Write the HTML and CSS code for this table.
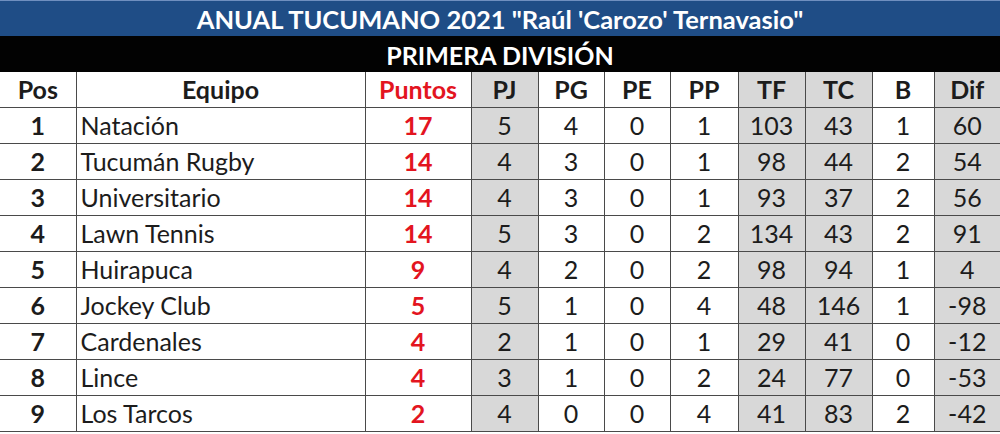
FILE: index.html
```html
<!DOCTYPE html>
<html lang="es">
<head>
<meta charset="utf-8">
<title>Anual Tucumano 2021</title>
<link rel="stylesheet" href="styles.css">
</head>
<body>
<div class="board">
  <div class="title">ANUAL TUCUMANO 2021 "Raúl 'Carozo' Ternavasio"</div>
  <div class="division">PRIMERA DIVISIÓN</div>
  <table class="standings">
    <colgroup>
      <col class="c-pos"><col class="c-team"><col class="c-pts">
      <col class="c-pj"><col class="c-pg"><col class="c-pe"><col class="c-pp">
      <col class="c-tf"><col class="c-tc"><col class="c-b"><col class="c-dif">
    </colgroup>
    <thead>
      <tr>
        <th>Pos</th><th>Equipo</th><th class="red">Puntos</th>
        <th class="shade">PJ</th><th>PG</th><th>PE</th><th>PP</th>
        <th class="shade">TF</th><th class="shade">TC</th><th>B</th><th class="shade">Dif</th>
      </tr>
    </thead>
    <tbody>
      <tr><td class="pos">1</td><td class="team">Natación</td><td class="pts">17</td><td class="shade">5</td><td>4</td><td>0</td><td>1</td><td class="shade">103</td><td class="shade">43</td><td>1</td><td class="shade">60</td></tr>
      <tr><td class="pos">2</td><td class="team">Tucumán Rugby</td><td class="pts">14</td><td class="shade">4</td><td>3</td><td>0</td><td>1</td><td class="shade">98</td><td class="shade">44</td><td>2</td><td class="shade">54</td></tr>
      <tr><td class="pos">3</td><td class="team">Universitario</td><td class="pts">14</td><td class="shade">4</td><td>3</td><td>0</td><td>1</td><td class="shade">93</td><td class="shade">37</td><td>2</td><td class="shade">56</td></tr>
      <tr><td class="pos">4</td><td class="team">Lawn Tennis</td><td class="pts">14</td><td class="shade">5</td><td>3</td><td>0</td><td>2</td><td class="shade">134</td><td class="shade">43</td><td>2</td><td class="shade">91</td></tr>
      <tr><td class="pos">5</td><td class="team">Huirapuca</td><td class="pts">9</td><td class="shade">4</td><td>2</td><td>0</td><td>2</td><td class="shade">98</td><td class="shade">94</td><td>1</td><td class="shade">4</td></tr>
      <tr><td class="pos">6</td><td class="team">Jockey Club</td><td class="pts">5</td><td class="shade">5</td><td>1</td><td>0</td><td>4</td><td class="shade">48</td><td class="shade">146</td><td>1</td><td class="shade">-98</td></tr>
      <tr><td class="pos">7</td><td class="team">Cardenales</td><td class="pts">4</td><td class="shade">2</td><td>1</td><td>0</td><td>1</td><td class="shade">29</td><td class="shade">41</td><td>0</td><td class="shade">-12</td></tr>
      <tr><td class="pos">8</td><td class="team">Lince</td><td class="pts">4</td><td class="shade">3</td><td>1</td><td>0</td><td>2</td><td class="shade">24</td><td class="shade">77</td><td>0</td><td class="shade">-53</td></tr>
      <tr><td class="pos">9</td><td class="team">Los Tarcos</td><td class="pts">2</td><td class="shade">4</td><td>0</td><td>0</td><td>4</td><td class="shade">41</td><td class="shade">83</td><td>2</td><td class="shade">-42</td></tr>
    </tbody>
  </table>
</div>
</body>
</html>
```
FILE: styles.css
```css
html, body {
  margin: 0;
  padding: 0;
  background: #ffffff;
}
body {
  font-family: Lato, "Open Sans", "Liberation Sans", sans-serif;
  color: #1c1c1c;
}
.board {
  width: 1000px;
}
.title {
  height: 36px;
  line-height: 36px;
  background: #1f4d86;
  border-top: 1px solid #6f8fbf;
  box-sizing: border-box;
  color: #ffffff;
  font-weight: 700;
  font-size: 25.5px;
  text-align: center;
}
.division {
  height: 36px;
  line-height: 38px;
  background: #020202;
  color: #ffffff;
  font-weight: 700;
  font-size: 25px;
  text-align: center;
}
.standings {
  width: 1000px;
  table-layout: fixed;
  border-collapse: collapse;
  font-size: 25px;
}
.c-pos { width: 76px; }
.c-team { width: 289px; }
.c-pts { width: 106px; }
.c-pj { width: 67px; }
.c-pg { width: 66px; }
.c-pe { width: 66px; }
.c-pp { width: 68px; }
.c-tf { width: 67px; }
.c-tc { width: 67px; }
.c-b { width: 62px; }
.c-dif { width: 66px; }
.standings th,
.standings td {
  height: 35px;
  padding: 0;
  border: 1px solid #4a4a4a;
  text-align: center;
  vertical-align: middle;
  white-space: nowrap;
  line-height: 35px;
}
.standings tr > :first-child {
  border-left: none;
}
.standings tr > :last-child {
  border-right: none;
}
.standings thead th {
  border-top: none;
  font-weight: 700;
  font-size: 25px;
}
.standings th.red {
  color: #e3151f;
}
.standings .shade {
  background: #d8d8d8;
}
.standings td.pos {
  font-weight: 700;
}
.standings td.team {
  text-align: left;
  padding-left: 4px;
}
.standings td.pts {
  color: #e3151f;
  font-weight: 700;
}
```
